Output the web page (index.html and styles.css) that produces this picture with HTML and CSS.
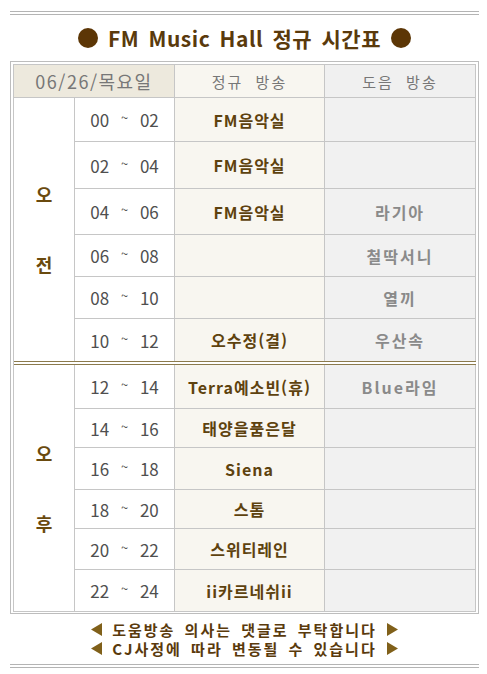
FILE: index.html
```html
<!DOCTYPE html>
<html lang="ko">
<head>
<meta charset="utf-8">
<title>FM Music Hall 정규 시간표</title>
<link rel="stylesheet" href="styles.css">
</head>
<body>
<div class="page">
  <div class="rule"></div>
  <h1 class="title"><span class="dot"></span><span class="title-text">FM Music Hall 정규 시간표</span><span class="dot"></span></h1>
  <div class="frame">
    <table class="schedule">
      <colgroup><col class="c1"><col class="c2"><col class="c3"><col class="c4"></colgroup>
      <thead>
        <tr class="head">
          <th colspan="2" class="h-date">06/26/목요일</th>
          <th class="h-reg">정규 방송</th>
          <th class="h-help">도음 방송</th>
        </tr>
      </thead>
      <tbody>
        <tr class="r44">
          <td rowspan="6" class="period nb">오<br><br>전</td>
          <td class="time">00 <span class="tl">~</span> 02</td>
          <td class="reg">FM음악실</td>
          <td class="help"></td>
        </tr>
        <tr class="r47">
          <td class="time">02 <span class="tl">~</span> 04</td>
          <td class="reg">FM음악실</td>
          <td class="help"></td>
        </tr>
        <tr class="r46">
          <td class="time">04 <span class="tl">~</span> 06</td>
          <td class="reg">FM음악실</td>
          <td class="help">라기아</td>
        </tr>
        <tr class="r42">
          <td class="time">06 <span class="tl">~</span> 08</td>
          <td class="reg"></td>
          <td class="help">철딱서니</td>
        </tr>
        <tr class="r42">
          <td class="time">08 <span class="tl">~</span> 10</td>
          <td class="reg"></td>
          <td class="help">열끼</td>
        </tr>
        <tr class="r42">
          <td class="time nb">10 <span class="tl">~</span> 12</td>
          <td class="reg nb">오수정(결)</td>
          <td class="help nb">우산속</td>
        </tr>
        <tr class="sep"><td colspan="4"></td></tr>
        <tr class="r44">
          <td rowspan="6" class="period">오<br><br>후</td>
          <td class="time">12 <span class="tl">~</span> 14</td>
          <td class="reg">Terra예소빈(휴)</td>
          <td class="help">Blue라임</td>
        </tr>
        <tr class="r39">
          <td class="time">14 <span class="tl">~</span> 16</td>
          <td class="reg">태양을품은달</td>
          <td class="help"></td>
        </tr>
        <tr class="r42">
          <td class="time">16 <span class="tl">~</span> 18</td>
          <td class="reg">Siena</td>
          <td class="help"></td>
        </tr>
        <tr class="r39">
          <td class="time">18 <span class="tl">~</span> 20</td>
          <td class="reg">스톰</td>
          <td class="help"></td>
        </tr>
        <tr class="r41">
          <td class="time">20 <span class="tl">~</span> 22</td>
          <td class="reg">스위티레인</td>
          <td class="help"></td>
        </tr>
        <tr class="r42">
          <td class="time">22 <span class="tl">~</span> 24</td>
          <td class="reg">ii카르네쉬ii</td>
          <td class="help"></td>
        </tr>
      </tbody>
    </table>
  </div>
  <div class="notes">
    <p class="note"><svg class="tri" viewBox="0 0 11 13" width="11" height="13"><polygon points="11,0 11,13 0,6.5"/></svg><span>도움방송 의사는 댓글로 부탁합니다</span><svg class="tri" viewBox="0 0 11 13" width="11" height="13"><polygon points="0,0 0,13 11,6.5"/></svg></p>
    <p class="note"><svg class="tri" viewBox="0 0 11 13" width="11" height="13"><polygon points="11,0 11,13 0,6.5"/></svg><span>CJ사정에 따라 변동될 수 있습니다</span><svg class="tri" viewBox="0 0 11 13" width="11" height="13"><polygon points="0,0 0,13 11,6.5"/></svg></p>
  </div>
  <div class="rule"></div>
</div>
</body>
</html>
```
FILE: styles.css
```css
* { box-sizing: border-box; }
html, body { margin: 0; padding: 0; background: #fff; }
body {
  font-family: "Noto Sans CJK KR", "Noto Sans", sans-serif;
  width: 487px;
}
.page {
  width: 469px;
  margin: 0 0 0 10px;
  padding-top: 11px;
}
.rule {
  height: 4px;
  border-top: 1px solid #b4b4b4;
  border-bottom: 1px solid #b4b4b4;
}
.title {
  margin: 0;
  height: 46px;
  display: flex;
  align-items: center;
  justify-content: center;
  gap: 10px;
  font-size: 21px;
  font-weight: 700;
  color: #5a3a0c;
  letter-spacing: 0.5px;
  word-spacing: 3px;
}
.dot {
  width: 20px;
  height: 20px;
  border-radius: 50%;
  background: #5c3606;
  flex: none;
}
.frame {
  border: 1px solid #bdbdbd;
  padding: 2px 2px 1px 2px;
}
.schedule {
  width: 463px;
  table-layout: fixed;
  border-collapse: separate;
  border-spacing: 0;
  border-top: 1px solid #c6c6c6;
  border-left: 1px solid #c6c6c6;
}
.c1 { width: 61px; }
.c2 { width: 100px; }
.c3 { width: 150px; }
.c4 { width: 151px; }
.schedule th, .schedule td {
  padding: 0;
  text-align: center;
  vertical-align: middle;
  border-right: 1px solid #c6c6c6;
  border-bottom: 1px solid #c6c6c6;
}
.schedule .nb { border-bottom: 0; }
.head { height: 33px; }
.head th { font-weight: 400; color: #777; }
.h-date { background: #ede9dd; font-size: 18px; letter-spacing: 1.5px; }
.h-reg { background: #f8f6f0; font-size: 15px; word-spacing: 6px; letter-spacing: 2px; }
.h-help { background: #f0f0f0; font-size: 15px; word-spacing: 6px; letter-spacing: 2px; }
.r39 { height: 39px; }
.r41 { height: 41px; }
.r42 { height: 42px; }
.r44 { height: 44px; }
.r46 { height: 46px; }
.r47 { height: 47px; }
.period {
  background: #fff;
  font-size: 18px;
  font-weight: 700;
  color: #6a4a0e;
  line-height: 35px;
}
.time {
  background: #fff;
  font-size: 17px;
  color: #4f4f4f;
  word-spacing: 7px;
}
.tl { font-size: 13px; vertical-align: 4px; }
.reg {
  background: #f8f6f0;
  font-size: 16px;
  font-weight: 700;
  color: #5e420e;
  letter-spacing: 1px;
}
.help {
  background: #f1f1f1;
  font-size: 16px;
  font-weight: 700;
  color: #8a8a8a;
  letter-spacing: 2px;
}
.sep { height: 4px; }
.schedule .sep td {
  height: 4px;
  border-top: 1px solid #8b7a4c;
  border-bottom: 1px solid #8b7a4c;
  border-right: 0;
  background: #fff;
}
.notes { padding: 6px 0 6px; }
.note {
  margin: 0;
  height: 19px;
  display: flex;
  align-items: center;
  justify-content: center;
  gap: 10px;
  font-size: 15px;
  font-weight: 700;
  color: #5a3a0c;
  letter-spacing: 2px;
  word-spacing: 3px;
}
.tri { fill: #80601a; flex: none; }
```
